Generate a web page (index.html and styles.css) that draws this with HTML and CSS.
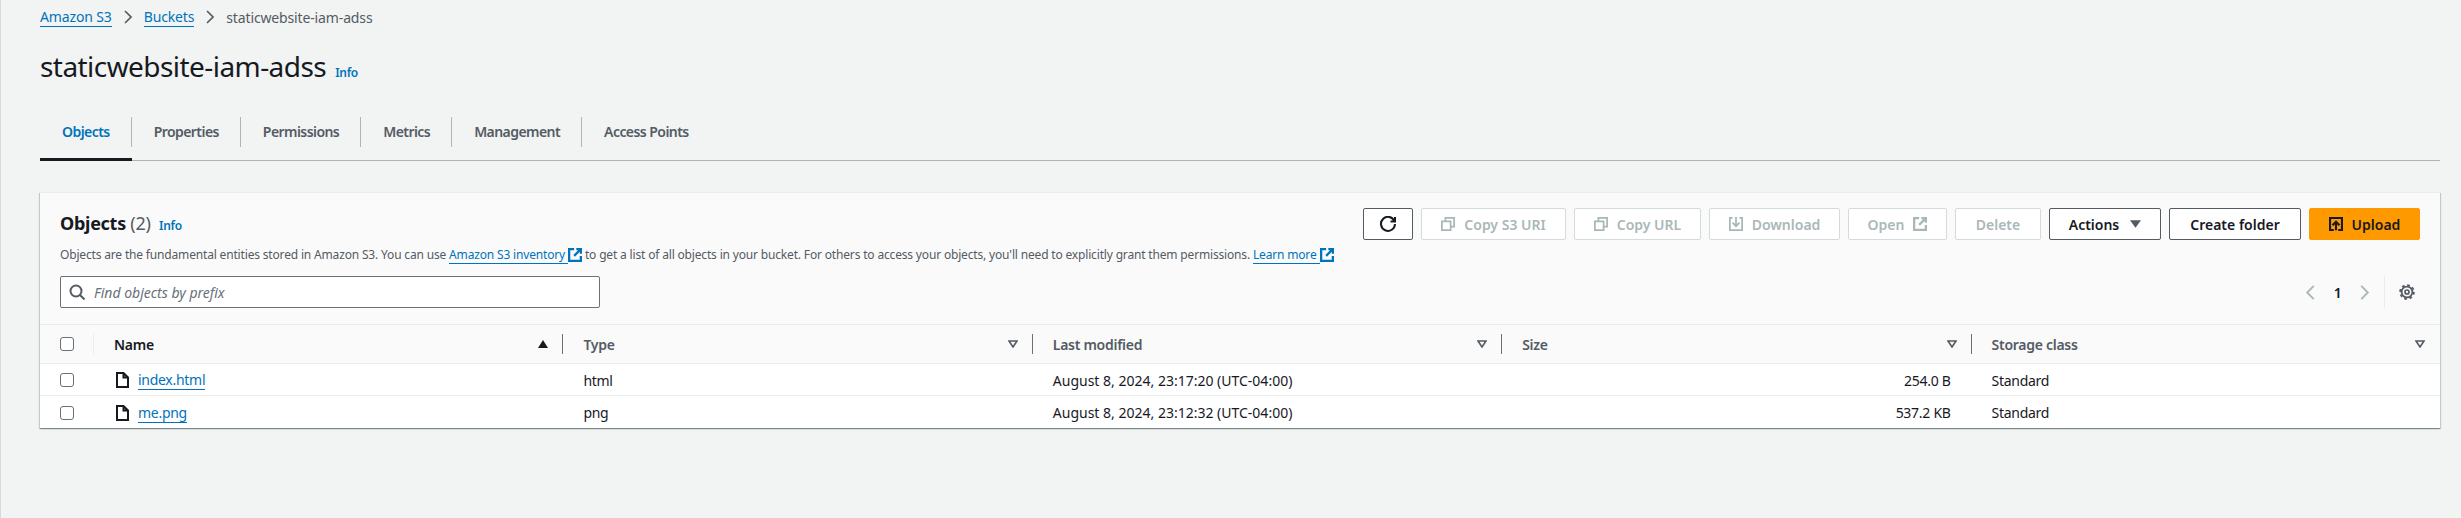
FILE: index.html
```html
<!DOCTYPE html>
<html lang="en">
<head>
    <meta charset="UTF-8">
    <title>staticwebsite-iam-adss - S3 bucket</title>
    <link rel="stylesheet" href="styles.css">
</head>
<body>
<svg class="icon-defs" aria-hidden="true">
    <symbol id="i-copy" viewBox="0 0 16 16"><path d="M5 4V1h10v10h-3M1 5h10v10H1z" fill="none" stroke="currentColor" stroke-width="2"/></symbol>
    <symbol id="i-ext" viewBox="0 0 16 16"><path d="M7 1.300H1.300v13.400h13.400V9M15 1L7 9M9.500 1.300h5.200v5.200" fill="none" stroke="currentColor" stroke-width="2.600"/></symbol>
    <symbol id="i-filter" viewBox="0 0 10 8"><path d="M1 1h8L5 7z" fill="none" stroke="currentColor" stroke-width="1.600"/></symbol>
    <symbol id="i-file" viewBox="0 0 13 16"><path d="M1 1h6.500L12 5.500V15H1zM7.500 1v4.500H12" fill="none" stroke="currentColor" stroke-width="2"/></symbol>
</svg>
<div class="page">
    <nav class="crumbs">
        <a class="link" href="#">Amazon S3</a>
        <svg class="crumb-sep" viewBox="0 0 8 14"><path d="M1 1l6 6-6 6" fill="none" stroke="currentColor" stroke-width="1.600"/></svg>
        <a class="link" href="#">Buckets</a>
        <svg class="crumb-sep" viewBox="0 0 8 14"><path d="M1 1l6 6-6 6" fill="none" stroke="currentColor" stroke-width="1.600"/></svg>
        <span>staticwebsite-iam-adss</span>
    </nav>

    <div class="page-title">
        <h1>staticwebsite-iam-adss</h1>
        <a class="info" href="#">Info</a>
    </div>

    <div class="tabs">
        <a class="tab active" href="#"><span>Objects</span></a>
        <a class="tab" href="#"><span>Properties</span></a>
        <a class="tab" href="#"><span>Permissions</span></a>
        <a class="tab" href="#"><span>Metrics</span></a>
        <a class="tab" href="#"><span>Management</span></a>
        <a class="tab" href="#"><span>Access Points</span></a>
    </div>

    <section class="card">
        <div class="card-head">
            <div class="head-top">
                <div class="head-text">
                    <h2>Objects <span class="count">(2)</span> <a class="info" href="#">Info</a></h2>
                    <p class="desc">Objects are the fundamental entities stored in Amazon S3. You can use <a class="link link-ext" href="#">Amazon S3 inventory</a><svg class="ext"><use href="#i-ext"/></svg> to get a list of all objects in your bucket. For others to access your objects, you'll need to explicitly grant them permissions. <a class="link link-ext" href="#">Learn more</a><svg class="ext"><use href="#i-ext"/></svg></p>
                </div>
                <div class="actions">
                    <button class="btn btn-refresh"><svg class="btn-icon" viewBox="0 0 16 16"><path d="M14.400 5A7 7 0 1 0 15 8M15 1v4.500h-4.500" fill="none" stroke="currentColor" stroke-width="2"/></svg></button>
                    <button class="btn w-uri" disabled><svg class="btn-icon"><use href="#i-copy"/></svg>Copy S3 URI</button>
                    <button class="btn w-url" disabled><svg class="btn-icon"><use href="#i-copy"/></svg>Copy URL</button>
                    <button class="btn w-down" disabled><svg class="btn-icon" viewBox="0 0 16 16"><path d="M4 1H1v14h14V1h-3M8 0v10M4 6.500L8 10.500l4-4" fill="none" stroke="currentColor" stroke-width="2"/></svg>Download</button>
                    <button class="btn w-open" disabled>Open<svg class="btn-icon"><use href="#i-ext"/></svg></button>
                    <button class="btn w-del" disabled>Delete</button>
                    <button class="btn w-act">Actions<svg class="caret" viewBox="0 0 12 8"><path d="M0 0h12L6 8z" fill="currentColor"/></svg></button>
                    <button class="btn w-new">Create folder</button>
                    <button class="btn btn-primary"><svg class="btn-icon" viewBox="0 0 16 16"><path d="M5.500 14.800H1.200V1.200h13.600v13.600h-4.300M8 15V6M4 9.500l4-4 4 4" fill="none" stroke="currentColor" stroke-width="2.400"/></svg>Upload</button>
                </div>
            </div>
            <div class="filter-row">
                <label class="search">
                    <svg class="search-icon" viewBox="0 0 16 16"><circle cx="7" cy="7" r="5.500" fill="none" stroke="currentColor" stroke-width="2"/><path d="M11 11l4.500 4.500" stroke="currentColor" stroke-width="2"/></svg>
                    <input type="text" placeholder="Find objects by prefix">
                </label>
                <div class="pager">
                    <svg class="pg-arrow" viewBox="0 0 10 16"><path d="M9 1L2 8l7 7" fill="none" stroke="currentColor" stroke-width="2"/></svg>
                    <span class="pg-num">1</span>
                    <svg class="pg-arrow" viewBox="0 0 10 16"><path d="M1 1l7 7-7 7" fill="none" stroke="currentColor" stroke-width="2"/></svg>
                    <span class="pg-gear"><svg viewBox="0 0 16 16"><circle cx="8" cy="8" r="2" fill="none" stroke="currentColor" stroke-width="1.700"/><circle cx="8" cy="8" r="5.400" fill="none" stroke="currentColor" stroke-width="1.800"/><circle cx="8" cy="8" r="6.900" fill="none" stroke="currentColor" stroke-width="1.800" stroke-dasharray="2.700 2.720"/></svg></span>
                </div>
            </div>
        </div>

        <div class="row row-head">
            <div class="cell cell-check"><span class="check"></span></div>
            <div class="cell">Name<svg class="sort" viewBox="0 0 10 8"><path d="M5 0l5 8H0z" fill="currentColor"/></svg></div>
            <div class="cell">Type<svg class="sort sort-off"><use href="#i-filter"/></svg></div>
            <div class="cell">Last modified<svg class="sort sort-off"><use href="#i-filter"/></svg></div>
            <div class="cell">Size<svg class="sort sort-off"><use href="#i-filter"/></svg></div>
            <div class="cell cell-last">Storage class<svg class="sort sort-off"><use href="#i-filter"/></svg></div>
        </div>
        <div class="row">
            <div class="cell cell-check"><span class="check"></span></div>
            <div class="cell"><svg class="file"><use href="#i-file"/></svg><a class="link" href="#">index.html</a></div>
            <div class="cell">html</div>
            <div class="cell cell-date">August 8, 2024, 23:17:20 (UTC-04:00)</div>
            <div class="cell cell-size">254.0 B</div>
            <div class="cell">Standard</div>
        </div>
        <div class="row">
            <div class="cell cell-check"><span class="check"></span></div>
            <div class="cell"><svg class="file"><use href="#i-file"/></svg><a class="link" href="#">me.png</a></div>
            <div class="cell">png</div>
            <div class="cell cell-date">August 8, 2024, 23:12:32 (UTC-04:00)</div>
            <div class="cell cell-size">537.2 KB</div>
            <div class="cell">Standard</div>
        </div>
    </section>
</div>
</body>
</html>
```

FILE: styles.css
```css
* {
    box-sizing: border-box;
}

html, body {
    margin: 0;
    height: 100%;
}

body {
    background: #f2f3f3;
    color: #16191f;
    font-family: "Noto Sans", "Liberation Sans", sans-serif;
    font-size: 14px;
    letter-spacing: -0.02em;
}

.icon-defs {
    display: none;
}

.page {
    min-height: 518px;
    padding: 7px 21px 0 39px;
    border-left: 1px solid #d5dbdb;
}

.link {
    color: #0073bb;
    text-decoration: none;
    border-bottom: 1px solid #0073bb;
}

.link-ext {
    padding-right: 3px;
}

.info {
    color: #0073bb;
    font-size: 12px;
    font-weight: 600;
    text-decoration: none;
}

/* breadcrumbs */
.crumbs {
    display: flex;
    align-items: center;
    height: 20px;
    color: #545b64;
    letter-spacing: -0.01em;
}

.crumbs .link {
    line-height: 18px;
}

.crumb-sep {
    width: 8px;
    height: 14px;
    margin: 0 12px;
    color: #545b64;
}

/* title */
.page-title {
    display: flex;
    align-items: baseline;
    gap: 9px;
    margin-top: 21px;
    height: 36px;
}

h1 {
    margin: 0;
    font-size: 28px;
    font-weight: 400;
    line-height: 36px;
    letter-spacing: -0.02em;
}

/* tabs */
.tabs {
    display: flex;
    height: 44px;
    margin-top: 33px;
    border-bottom: 1px solid #aab7b8;
}

.tab {
    display: block;
    height: 43px;
    padding-left: 1px;
    color: #545b64;
    font-weight: 600;
    letter-spacing: -0.04em;
    text-decoration: none;
}

.tab span {
    display: block;
    height: 30px;
    padding: 0 21px;
    line-height: 30px;
    border-right: 1px solid #aab7b8;
}

.tab:last-child span {
    border-right: 0;
}

.tab.active {
    color: #0073bb;
    border-bottom: 3px solid #16191f;
    height: 44px;
}

/* card */
.card {
    margin-top: 31px;
    background: #fff;
    box-shadow: 0 1px 1px 0 rgba(0, 28, 36, .3), 1px 1px 1px 0 rgba(0, 28, 36, .15), -1px 1px 1px 0 rgba(0, 28, 36, .15);
    border-top: 1px solid #eaeded;
}

.card-head {
    height: 132px;
    padding: 15px 20px 0;
    background: #fafafa;
    border-bottom: 1px solid #eaeded;
}

.head-top {
    display: flex;
    justify-content: space-between;
    height: 68px;
}

.head-text {
    flex: 1;
    padding-top: 4px;
    width: 0;
    min-width: 0;
    white-space: nowrap;
}

h2 {
    margin: 0;
    font-size: 18px;
    font-weight: 700;
    line-height: 22px;
}

h2 .count {
    color: #545b64;
    font-weight: 400;
}

h2 .info {
    margin-left: 4px;
}

.desc {
    margin: 10px 0 0;
    color: #545b64;
    font-size: 12px;
    line-height: 16px;
    letter-spacing: -0.014em;
}

.ext {
    width: 14px;
    height: 14px;
    vertical-align: -3px;
    color: #0073bb;
}

.actions {
    display: flex;
    gap: 8px;
    height: 32px;
}

.btn {
    display: flex;
    align-items: center;
    justify-content: center;
    gap: 9px;
    height: 32px;
    padding: 0;
    background: #fff;
    border: 1px solid #545b64;
    border-radius: 2px;
    color: #16191f;
    font: 600 14px "Noto Sans", "Liberation Sans", sans-serif;
}

.btn:disabled {
    border-color: #d5dbdb;
    color: #aab7b8;
}

.btn-icon {
    width: 14px;
    height: 14px;
}

.btn-refresh {
    width: 50px;
}

.btn-refresh .btn-icon {
    width: 16px;
    height: 16px;
}

.w-uri { width: 145px; }
.w-url { width: 127px; }
.w-down { width: 131px; }
.w-open { width: 99px; }
.w-del { width: 86px; }
.w-act { width: 112px; }
.w-new { width: 132px; }

.caret {
    width: 11px;
    height: 8px;
    margin-left: 2px;
    color: #545b64;
}

.btn-primary {
    width: 111px;
    background: #ff9900;
    border-color: #ff9900;
}

.filter-row {
    display: flex;
    justify-content: space-between;
    align-items: stretch;
    height: 32px;
}

.search {
    display: flex;
    align-items: center;
    gap: 9px;
    width: 540px;
    padding: 0 8px;
    background: #fff;
    border: 1px solid #687078;
    border-radius: 2px;
    color: #545b64;
}

.search-icon {
    flex: none;
    width: 16px;
    height: 16px;
}

.search input {
    flex: 1;
    border: 0;
    outline: 0;
    padding: 0;
    background: none;
    font: italic 14px "Noto Sans", "Liberation Sans", sans-serif;
    color: #16191f;
}

.search input::placeholder {
    color: #687078;
}

.pager {
    display: flex;
    align-items: center;
    padding-right: 5px;
    color: #aab7b8;
}

.pg-arrow {
    width: 10px;
    height: 15px;
}

.pg-num {
    width: 45px;
    color: #16191f;
    font-weight: 600;
    text-align: center;
}

.pg-gear {
    display: flex;
    align-items: center;
    height: 32px;
    margin-left: 14px;
    padding-left: 14px;
    border-left: 1px solid #eaeded;
    color: #545b64;
}

.pg-gear svg {
    width: 16px;
    height: 16px;
}

/* table */
.row {
    display: grid;
    grid-template-columns: 53px repeat(5, 1fr);
    height: 32px;
    padding-top: 1px;
    border-bottom: 1px solid #eaeded;
    background: #fff;
}

.row:last-child {
    border-bottom: 0;
}

.row-head {
    height: 39px;
    padding-top: 0;
    background: #fafafa;
    font-weight: 600;
    color: #545b64;
    border-bottom: 1px solid #eaeded;
}

.cell {
    display: flex;
    align-items: center;
    padding-left: 21px;
    min-width: 0;
    color: #16191f;
    font-size: 14px;
    white-space: nowrap;
}

.cell-date {
    letter-spacing: 0;
}

.row-head .cell {
    position: relative;
    color: #545b64;
}

.row-head .cell:nth-child(2) {
    color: #16191f;
}

.row-head .cell + .cell + .cell::before,
.row-head .cell:nth-child(2)::before {
    content: "";
    position: absolute;
    left: 0;
    top: 9px;
    height: 20px;
    border-left: 1px solid #687078;
}

.row-head .cell:nth-child(2)::before {
    border-color: #eaeded;
}

.cell-check {
    padding-left: 20px;
}

.check {
    width: 14px;
    height: 14px;
    border: 1px solid #687078;
    border-radius: 3px;
    background: #fff;
}

.sort {
    width: 10px;
    height: 8px;
    margin-left: auto;
    margin-right: 14px;
    color: #16191f;
}

.sort-off {
    color: #545b64;
}

.cell-last .sort {
    margin-right: 15px;
}

.file {
    flex: none;
    width: 13px;
    height: 16px;
    margin: 0 9px 0 2px;
}

.cell-size {
    justify-content: flex-end;
    padding-right: 20px;
}
```
